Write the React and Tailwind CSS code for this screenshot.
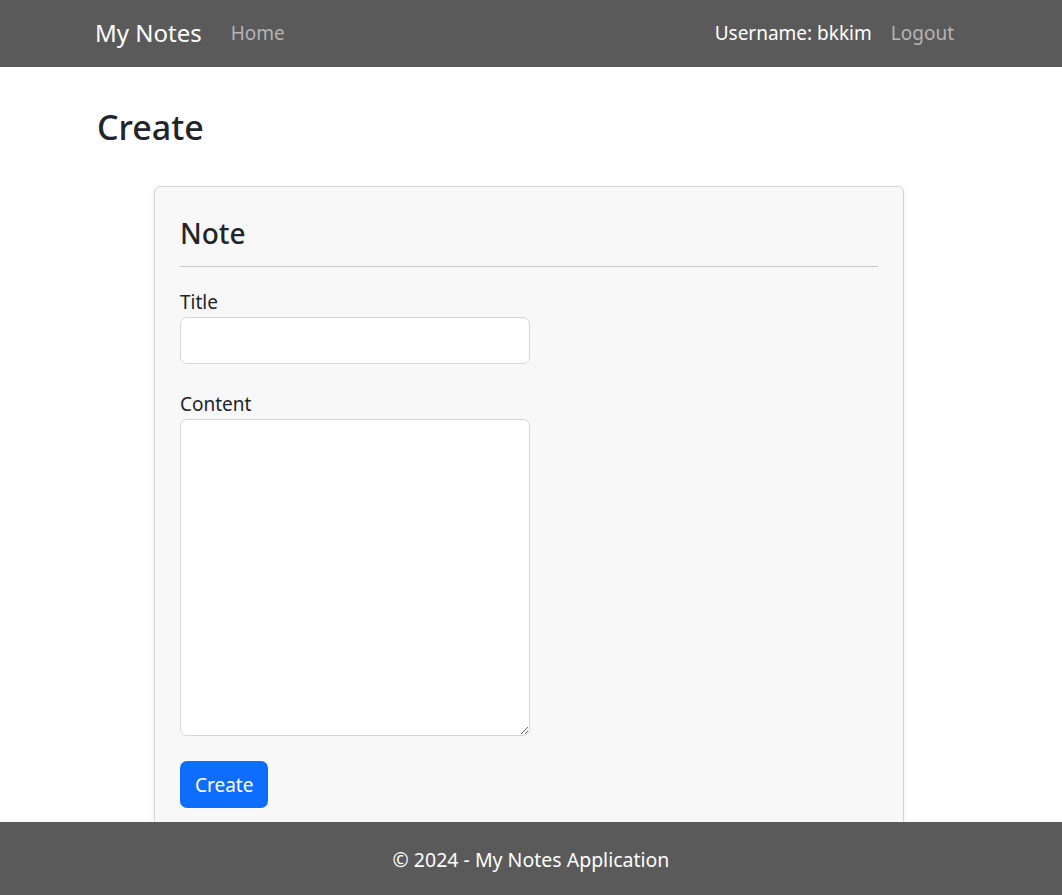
export default function App() {
  return (
    <div className="relative h-[895px] overflow-hidden bg-white text-[#212529] font-['Noto_Sans',sans-serif]">
      <nav className="h-[67px] bg-[#5a5a5a] flex items-center px-[95px]">
        <a className="text-[24px] text-white mr-[29px] leading-none pb-[1px]">My Notes</a>
        <a className="text-[19px] text-[#b4b4b4]">Home</a>
        <div className="ml-auto flex items-center gap-[19px] text-[19px]">
          <span className="text-white">Username: bkkim</span>
          <a className="text-[#b4b4b4] mr-[13px]">Logout</a>
        </div>
      </nav>

      <main className="px-[95px] pt-[40px]">
        <h2 className="text-[34px] font-medium leading-[1.2] mb-[38px] ml-[2px]">Create</h2>

        <div className="ml-[59px] w-[750px] rounded-[6px] border border-[#d4d4d4] bg-[#f8f8f8] shadow-[0_2px_6px_rgba(0,0,0,0.08)] px-[25px] pt-[30px] pb-[30px]">
          <h3 className="text-[28px] font-medium leading-[1.2]">Note</h3>
          <hr className="mt-[16px] mb-[20px] border-t border-[#c8c8c8]" />

          <form className="flex flex-col">
            <label className="text-[19px] leading-[30px]">Title</label>
            <input className="w-[350px] h-[47px] rounded-[7px] border border-[#d6d6d6] bg-white px-[15px] text-[20px] outline-none" />

            <label className="text-[19px] leading-[30px] mt-[25px]">Content</label>
            <textarea className="w-[350px] h-[317px] rounded-[7px] border border-[#d6d6d6] bg-white px-[15px] py-[8px] text-[20px] outline-none" />

            <button type="button" className="mt-[25px] self-start h-[47px] px-[15px] rounded-[7px] bg-[#0d6efd] text-white text-[19px]">Create</button>
          </form>
        </div>
      </main>

      <footer className="absolute bottom-0 left-0 right-0 h-[73px] bg-[#5a5a5a] flex items-center justify-center pt-[3px]">
        <span className="text-white text-[19.5px]">© 2024 - My Notes Application</span>
      </footer>
    </div>
  );
}
